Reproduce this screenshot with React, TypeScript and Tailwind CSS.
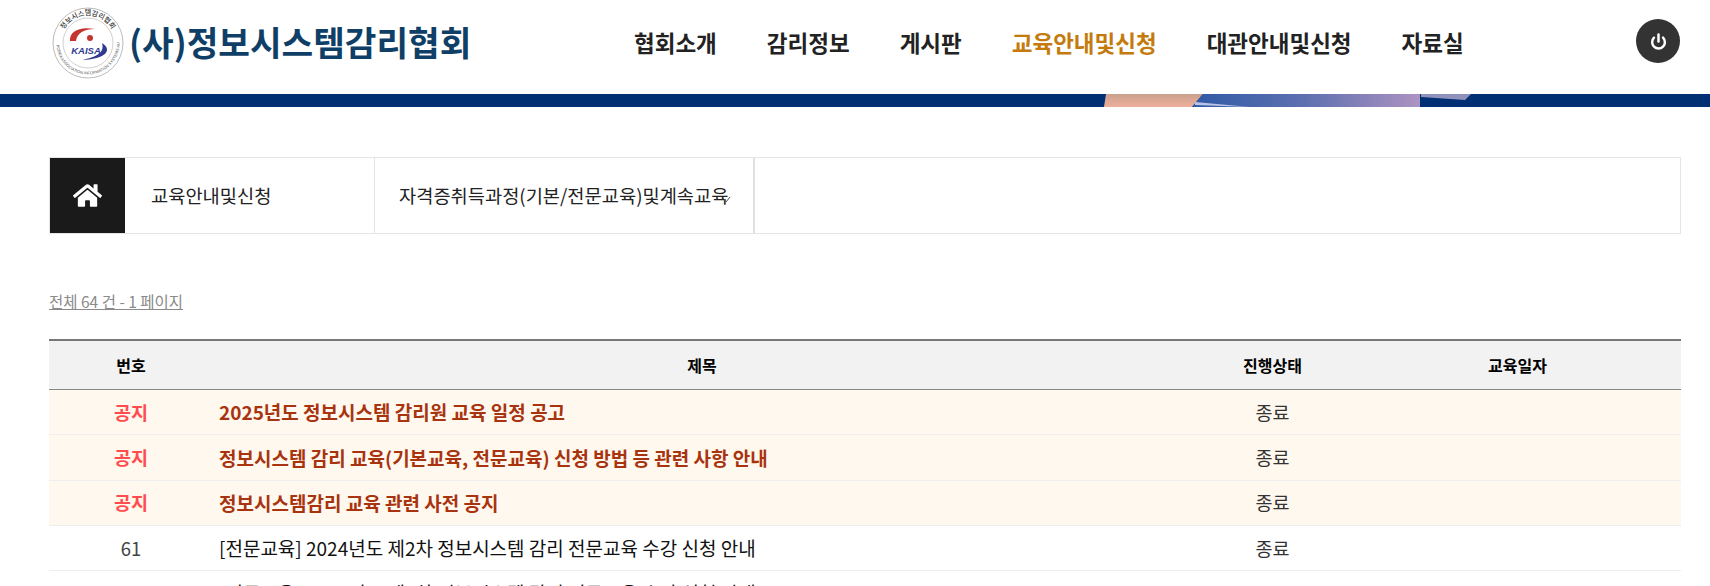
import { Power } from 'lucide-react'
import { FaHome } from 'react-icons/fa'

const NAV_ITEMS = [
  { label: '협회소개' },
  { label: '감리정보' },
  { label: '게시판' },
  { label: '교육안내및신청', active: true },
  { label: '대관안내및신청' },
  { label: '자료실' },
]

const NOTICES = [
  '2025년도 정보시스템 감리원 교육 일정 공고',
  '정보시스템 감리 교육(기본교육, 전문교육) 신청 방법 등 관련 사항 안내',
  '정보시스템감리 교육 관련 사전 공지',
]

const POSTS = [
  { no: '61', title: '[전문교육] 2024년도 제2차 정보시스템 감리 전문교육 수강 신청 안내' },
  { no: '60', title: '[전문교육] 2024년도 제2차 정보시스템 감리 전문교육 수강 신청 안내' },
]

const ROW = 'grid grid-cols-[164px_978px_163px_327px] items-center border-b border-[#eeeeee] pt-[1px]'

function Logo() {
  return (
    <svg width="72" height="72" viewBox="0 0 72 72" className="shrink-0">
      <defs>
        <path id="ring-top" d="M 8.5 36 A 27.5 27.5 0 0 1 63.5 36" />
        <path id="ring-bottom" d="M 4.5 36 A 31.5 31.5 0 0 0 67.5 36" />
      </defs>
      <circle cx="36" cy="36" r="35" fill="#fff" stroke="#aaa" strokeWidth="0.8" />
      <circle cx="36" cy="36" r="25" fill="#fff" stroke="#bbb" strokeWidth="0.7" />
      <text fontSize="7" fontWeight="500" fill="#333" fontFamily="'Noto Sans CJK KR', sans-serif">
        <textPath href="#ring-top" startOffset="50%" textAnchor="middle">정보시스템감리협회</textPath>
      </text>
      <text fontSize="4" fill="#555" fontFamily="'Liberation Sans', sans-serif">
        <textPath href="#ring-bottom" startOffset="50%" textAnchor="middle">THE KOREA ASSOCIATION INFORMATION SYSTEMS AUDIT</textPath>
      </text>
      <path d="M 18 34 C 17 24 28 19 43 22 C 32 22 25 26 24 34 Z" fill="#c4352f" />
      <circle cx="38" cy="31" r="3" fill="#c4352f" />
      <path d="M 50 36 C 60 42 56 52 30 53 C 44 50 53 46 50 36 Z" fill="#2f3a8f" />
      <text x="34" y="47" textAnchor="middle" fontSize="9.5" fontWeight="700" fontStyle="italic" fill="#2f3a8f" fontFamily="'Liberation Sans', sans-serif">KAISA</text>
    </svg>
  )
}

function Header() {
  return (
    <header className="flex h-[94px] items-center pl-[52px] pr-[30px]">
      <div className="flex w-[582px] items-center gap-[5px] pb-[8px]">
        <Logo />
        <span className="pb-[4px] text-[34.4px] font-bold leading-none whitespace-nowrap text-[#0f3f66]">(사)정보시스템감리협회</span>
      </div>
      <nav className="flex flex-1 items-center gap-[50px] pb-[9px]">
        {NAV_ITEMS.map((item) => (
          <a
            key={item.label}
            className={`text-[22.5px] font-bold leading-none whitespace-nowrap ${item.active ? 'text-[#c47a0c]' : 'text-[#222222]'}`}
          >
            {item.label}
          </a>
        ))}
      </nav>
      <button className="mb-[12px] flex h-[44px] w-[44px] items-center justify-center rounded-full bg-[#333333] text-white">
        <Power className="h-[17px] w-[17px]" strokeWidth={3.5} />
      </button>
    </header>
  )
}

function Banner() {
  return (
    <div className="h-[13px] bg-[#002f73]">
      <svg width="1710" height="13" viewBox="0 0 1710 13" className="block">
        <defs>
          <linearGradient id="panel" x1="0" x2="1" y1="0" y2="0">
            <stop offset="0" stopColor="#2f5aa6" />
            <stop offset="0.5" stopColor="#5f70b0" />
            <stop offset="1" stopColor="#ad93c2" />
          </linearGradient>
          <linearGradient id="skin" x1="0" x2="0" y1="0" y2="1">
            <stop offset="0" stopColor="#c9a08e" />
            <stop offset="1" stopColor="#eeb09c" />
          </linearGradient>
        </defs>
        <polygon points="1106,0 1203,0 1192,13 1104,13" fill="url(#skin)" />
        <polygon points="1203,0 1420,0 1420,13 1192,13" fill="url(#panel)" />
        <polygon points="1195,8 1250,13 1195,11" fill="#b9c4e6" />
        <polygon points="1421,0 1471,0 1465,6 1421,3" fill="#8f93bb" />
      </svg>
    </div>
  )
}

function Breadcrumb() {
  return (
    <div className="ml-[49px] mr-[29px] mt-[50px] flex h-[77px] border border-[#e5e5e5] text-[18.7px] text-[#222222]">
      <div className="flex w-[75px] shrink-0 items-center justify-center bg-[#1a1a1a] text-white">
        <FaHome className="h-[29px] w-[29px]" />
      </div>
      <div className="flex w-[250px] shrink-0 items-center border-r border-[#e5e5e5] pl-[26px]">교육안내및신청</div>
      <div className="relative flex w-[380px] shrink-0 items-center border-r-2 border-[#e0e0e0] pl-[24px] whitespace-nowrap">
        자격증취득과정(기본/전문교육)및계속교육
        <svg width="9" height="8" viewBox="0 0 9 8" className="absolute right-[22px] top-[38px]">
          <path d="M1 2 L4 6 L8 1" fill="none" stroke="#555" strokeWidth="1" />
        </svg>
      </div>
    </div>
  )
}

function BoardTable() {
  return (
    <div className="ml-[49px] mr-[29px] mt-[27px] border-t-2 border-[#777777]">
      <div className="grid h-[49px] grid-cols-[164px_978px_163px_327px] items-center border-b border-[#888888] bg-[#f2f2f2] text-center text-[16px] font-bold text-black">
        <div>번호</div>
        <div>제목</div>
        <div>진행상태</div>
        <div>교육일자</div>
      </div>
      {NOTICES.map((title) => (
        <div key={title} className={`${ROW} h-[45.3px] bg-[#fff8ee]`}>
          <div className="text-center text-[18.5px] font-bold text-[#ff4d4f]">공지</div>
          <div className="pl-[6px] text-[19px] font-bold text-[#a8340f]">{title}</div>
          <div className="text-center text-[18.5px] text-[#333333]">종료</div>
          <div />
        </div>
      ))}
      {POSTS.map((post) => (
        <div key={post.no} className={`${ROW} h-[45px]`}>
          <div className="text-center text-[18.5px] text-[#444444]">{post.no}</div>
          <div className="pl-[6px] text-[19px] text-[#111111]">{post.title}</div>
          <div className="text-center text-[18.5px] text-[#333333]">종료</div>
          <div />
        </div>
      ))}
    </div>
  )
}

export default function App() {
  return (
    <div className="h-[586px] overflow-hidden bg-white font-['Noto_Sans_CJK_KR',sans-serif]">
      <Header />
      <Banner />
      <Breadcrumb />
      <div className="mx-[49px] mt-[57px] text-[15.5px] leading-[21px] text-[#8a8a8a] underline">전체 64 건 - 1 페이지</div>
      <BoardTable />
    </div>
  )
}
